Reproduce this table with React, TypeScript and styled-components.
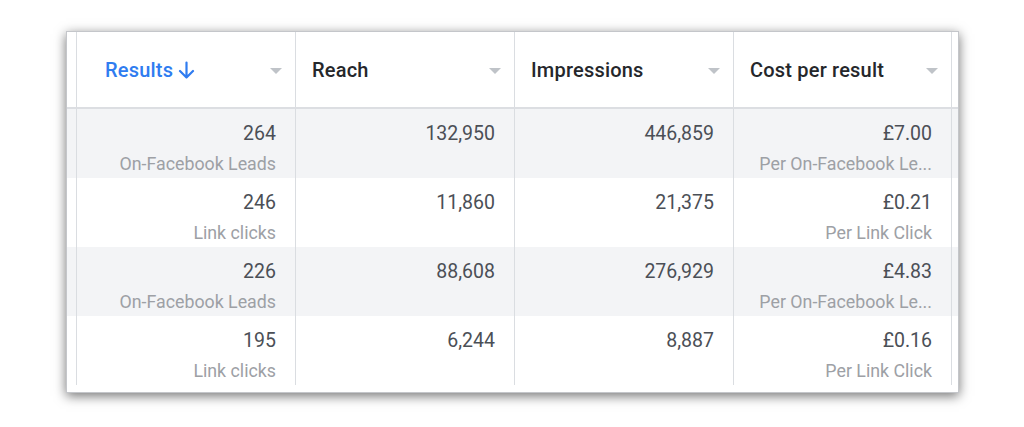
import styled, { createGlobalStyle } from "styled-components";

const GlobalStyle = createGlobalStyle`
  html, body {
    margin: 0;
    padding: 0;
    background: #ffffff;
  }
  body {
    font-family: Roboto, "Liberation Sans", Arial, sans-serif;
  }
`;

const COLS = "10px 219px 219px 219px 218px 7px";

const Page = styled.div`
  width: 1024px;
  height: 427px;
  padding: 31px 0 0 66px;
  box-sizing: border-box;
`;

const Card = styled.div`
  width: 893px;
  height: 362px;
  box-sizing: border-box;
  background: #ffffff;
  border: 1px solid #c4c6ca;
  box-shadow: 0 3px 11px rgba(0, 0, 0, 0.55);
  overflow: hidden;
`;

const HeaderRow = styled.div`
  display: grid;
  grid-template-columns: ${COLS};
  height: 75px;
  border-bottom: 2px solid #dcdee2;
`;

const Row = styled.div<{ $shaded: boolean }>`
  display: grid;
  grid-template-columns: ${COLS};
  height: 69px;
  background: ${(p) => (p.$shaded ? "#f3f4f6" : "#ffffff")};
`;

const Edge = styled.div`
  border-right: 1px solid #dadde1;
`;

const HeaderCell = styled.div<{ $first?: boolean }>`
  display: flex;
  align-items: center;
  justify-content: space-between;
  padding: 0 13px 0 ${(p) => (p.$first ? "28px" : "16px")};
  border-right: 1px solid #dadde1;
  min-width: 0;
`;

const HeaderTitle = styled.div<{ $active?: boolean }>`
  display: flex;
  align-items: center;
  gap: 5px;
  font-size: 20px;
  font-weight: 500;
  letter-spacing: 0.2px;
  color: ${(p) => (p.$active ? "#2f7cf0" : "#25272b")};
  white-space: nowrap;
`;

const Caret = styled.span`
  width: 0;
  height: 0;
  border-left: 6px solid transparent;
  border-right: 6px solid transparent;
  border-top: 6px solid #bfc3c8;
  margin-top: 2px;
`;

const Cell = styled.div`
  display: flex;
  flex-direction: column;
  align-items: flex-end;
  padding: 12px 19px 0 16px;
  border-right: 1px solid #dadde1;
  min-width: 0;
`;

const Value = styled.div`
  font-size: 19.5px;
  line-height: 26px;
  color: #4b4f56;
`;

const Label = styled.div`
  margin-top: 6px;
  font-size: 17.8px;
  line-height: 22px;
  color: #9da0a5;
  white-space: nowrap;
`;

type Metric = { value: string; label?: string };

const rows: Metric[][] = [
  [
    { value: "264", label: "On-Facebook Leads" },
    { value: "132,950" },
    { value: "446,859" },
    { value: "£7.00", label: "Per On-Facebook Le..." },
  ],
  [
    { value: "246", label: "Link clicks" },
    { value: "11,860" },
    { value: "21,375" },
    { value: "£0.21", label: "Per Link Click" },
  ],
  [
    { value: "226", label: "On-Facebook Leads" },
    { value: "88,608" },
    { value: "276,929" },
    { value: "£4.83", label: "Per On-Facebook Le..." },
  ],
  [
    { value: "195", label: "Link clicks" },
    { value: "6,244" },
    { value: "8,887" },
    { value: "£0.16", label: "Per Link Click" },
  ],
];

const SortArrow = () => (
  <svg width="17" height="18" viewBox="0 0 17 18" fill="none">
    <path
      d="M8.5 1.5V16.5M2 10l6.5 6.5L15 10"
      stroke="#2f7cf0"
      strokeWidth="2.2"
      strokeLinecap="round"
      strokeLinejoin="round"
    />
  </svg>
);

export default function App() {
  return (
    <Page>
      <GlobalStyle />
      <Card>
        <HeaderRow>
          <Edge />
          <HeaderCell $first>
            <HeaderTitle $active>
              Results
              <SortArrow />
            </HeaderTitle>
            <Caret />
          </HeaderCell>
          <HeaderCell>
            <HeaderTitle>Reach</HeaderTitle>
            <Caret />
          </HeaderCell>
          <HeaderCell>
            <HeaderTitle>Impressions</HeaderTitle>
            <Caret />
          </HeaderCell>
          <HeaderCell>
            <HeaderTitle>Cost per result</HeaderTitle>
            <Caret />
          </HeaderCell>
          <div />
        </HeaderRow>
        {rows.map((r, i) => (
          <Row key={i} $shaded={i % 2 === 0}>
            <Edge />
            {r.map((m, j) => (
              <Cell key={j}>
                <Value>{m.value}</Value>
                {m.label && <Label>{m.label}</Label>}
              </Cell>
            ))}
            <div />
          </Row>
        ))}
      </Card>
    </Page>
  );
}
